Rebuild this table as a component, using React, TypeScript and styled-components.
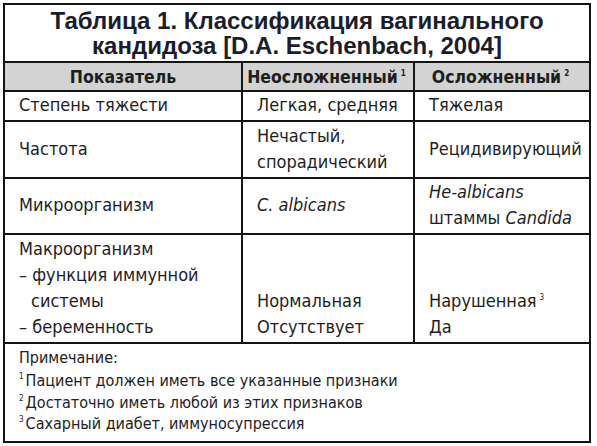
import styled, { createGlobalStyle } from "styled-components";

const GlobalStyle = createGlobalStyle`
  html, body {
    margin: 0;
    padding: 0;
    background: #ffffff;
  }
  body {
    font-family: "Liberation Sans Narrow", "DejaVu Sans Condensed", "Liberation Sans", sans-serif;
    color: #1e1e1e;
  }
`;

const Frame = styled.div`
  box-sizing: border-box;
  width: 588px;
  margin: 3px 0 0 3px;
  border: 2px solid #141414;
`;

const Title = styled.div`
  box-sizing: border-box;
  height: 58px;
  padding-top: 3px;
  text-align: center;
  font-family: "Liberation Sans", Arial, sans-serif;
  font-weight: 700;
  font-size: 24px;
  line-height: 25px;
  color: #1b1d2b;
  border-bottom: 2px solid #141414;
`;

const Table = styled.table`
  width: 100%;
  border-collapse: collapse;
  table-layout: fixed;
`;

const HeadCell = styled.th`
  height: 27px;
  padding: 0;
  background: #d3d3d3;
  font-weight: 700;
  font-size: 17.5px;
  color: #1e1e1e;
  text-align: center;
  vertical-align: middle;
  border-left: 2px solid #141414;
  border-bottom: 2px solid #141414;

  &:first-child {
    border-left: none;
  }
`;

const Cell = styled.td<{ $align?: "middle" | "bottom" }>`
  padding: 0 6px 2px 14px;
  font-size: 18px;
  line-height: 26px;
  color: #1e1e1e;
  vertical-align: ${(p) => p.$align ?? "middle"};
  border-left: 2px solid #141414;
  border-bottom: 2px solid #141414;

  &:first-child {
    border-left: none;
  }
`;

const Indent = styled.span`
  padding-left: 12px;
`;

const Sup = styled.sup`
  font-size: 8px;
  vertical-align: 7px;
  line-height: 0;
  margin: 0 3px 0 3px;
`;

const NoteSup = styled(Sup)`
  margin: 0 2px 0 0;
`;

const Notes = styled.div`
  padding: 2px 0 6px 14px;
  font-size: 16px;
  color: #222;
`;

const NoteTitle = styled.div`
  line-height: 24px;
`;

const Note = styled.div`
  line-height: 21.5px;
`;

type Row = {
  label: React.ReactNode;
  simple: React.ReactNode;
  complex: React.ReactNode;
  height: number;
  align?: "middle" | "bottom";
};

const rows: Row[] = [
  {
    label: "Степень тяжести",
    simple: "Легкая, средняя",
    complex: "Тяжелая",
    height: 29,
  },
  {
    label: "Частота",
    simple: (
      <>
        Нечастый,
        <br />
        спорадический
      </>
    ),
    complex: "Рецидивирующий",
    height: 57,
  },
  {
    label: "Микроорганизм",
    simple: <i>C. albicans</i>,
    complex: (
      <>
        <i>He-albicans</i>
        <br />
        штаммы <i>Candida</i>
      </>
    ),
    height: 53,
  },
  {
    label: (
      <>
        Макроорганизм
        <br />– функция иммунной
        <br />
        <Indent>системы</Indent>
        <br />– беременность
      </>
    ),
    simple: (
      <>
        Нормальная
        <br />
        Отсутствует
      </>
    ),
    complex: (
      <>
        Нарушенная<Sup>3</Sup>
        <br />
        Да
      </>
    ),
    height: 109,
    align: "bottom",
  },
];

export default function App() {
  return (
    <>
      <GlobalStyle />
      <Frame>
        <Title>
          Таблица 1. Классификация вагинального
          <br />
          кандидоза [D.A. Eschenbach, 2004]
        </Title>
        <Table>
          <colgroup>
            <col style={{ width: 237 }} />
            <col style={{ width: 172 }} />
            <col />
          </colgroup>
          <thead>
            <tr>
              <HeadCell>Показатель</HeadCell>
              <HeadCell>
                Неосложненный<Sup>1</Sup>
              </HeadCell>
              <HeadCell>
                Осложненный<Sup>2</Sup>
              </HeadCell>
            </tr>
          </thead>
          <tbody>
            {rows.map((row, i) => (
              <tr key={i} style={{ height: row.height }}>
                <Cell $align={row.align}>{row.label}</Cell>
                <Cell $align={row.align}>{row.simple}</Cell>
                <Cell $align={row.align}>{row.complex}</Cell>
              </tr>
            ))}
          </tbody>
        </Table>
        <Notes>
          <NoteTitle>Примечание:</NoteTitle>
          <Note>
            <NoteSup>1</NoteSup>Пациент должен иметь все указанные признаки
          </Note>
          <Note>
            <NoteSup>2</NoteSup>Достаточно иметь любой из этих признаков
          </Note>
          <Note>
            <NoteSup>3</NoteSup>Сахарный диабет, иммуносупрессия
          </Note>
        </Notes>
      </Frame>
    </>
  );
}
